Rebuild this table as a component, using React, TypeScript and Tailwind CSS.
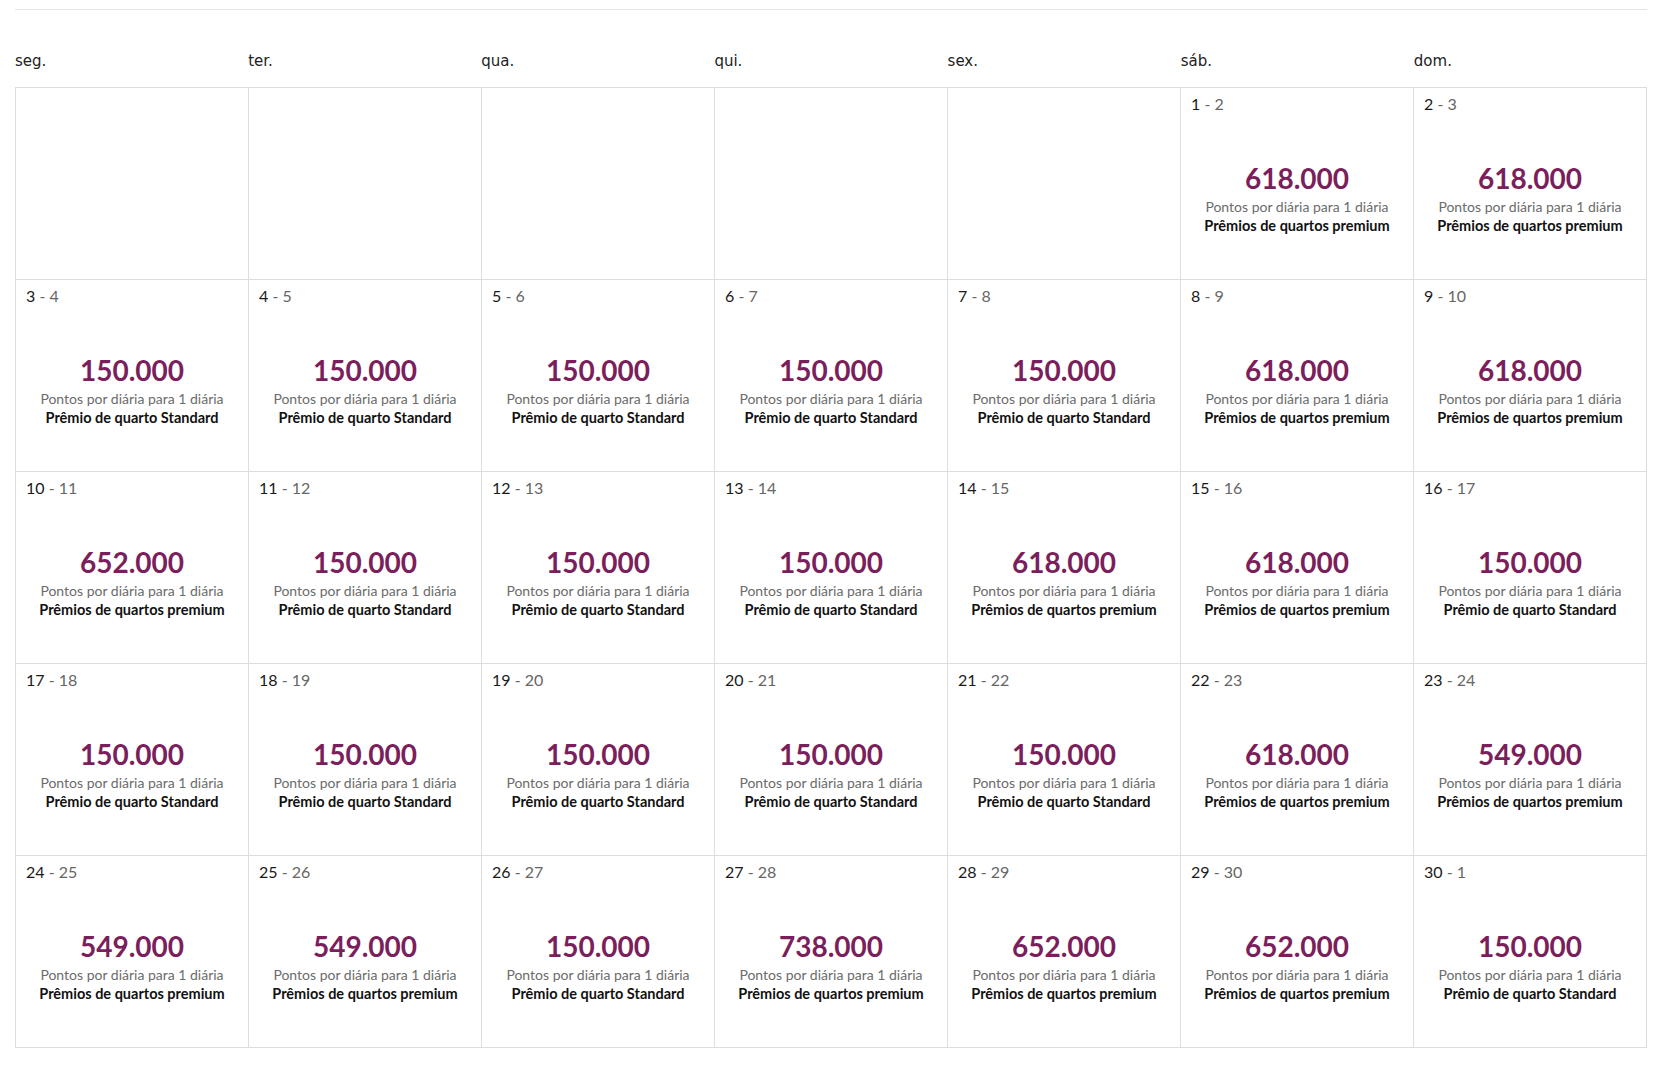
import React from "react";

type Cell = { from: number; to: number; points: string; premium: boolean } | null;

const P = (from: number, to: number, points: string): Cell => ({ from, to, points, premium: true });
const S = (from: number, to: number): Cell => ({ from, to, points: "150.000", premium: false });

const days = ["seg.", "ter.", "qua.", "qui.", "sex.", "sáb.", "dom."];

const cells: Cell[] = [
  null, null, null, null, null, P(1, 2, "618.000"), P(2, 3, "618.000"),
  S(3, 4), S(4, 5), S(5, 6), S(6, 7), S(7, 8), P(8, 9, "618.000"), P(9, 10, "618.000"),
  P(10, 11, "652.000"), S(11, 12), S(12, 13), S(13, 14), P(14, 15, "618.000"), P(15, 16, "618.000"), S(16, 17),
  S(17, 18), S(18, 19), S(19, 20), S(20, 21), S(21, 22), P(22, 23, "618.000"), P(23, 24, "549.000"),
  P(24, 25, "549.000"), P(25, 26, "549.000"), S(26, 27), P(27, 28, "738.000"), P(28, 29, "652.000"), P(29, 30, "652.000"), S(30, 1),
];

function DayCell({ cell }: { cell: Cell }) {
  return (
    <div className="h-[192px] border-r border-b border-[#dddddd] font-['Lato',sans-serif]">
      {cell && (
        <>
          <div className="pt-[6px] pl-[10px] text-[16px] leading-[20px]">
            <span className="text-[#1a1a1a]">{cell.from}</span>
            <span className="text-[#666666]"> - {cell.to}</span>
          </div>
          <div className="mt-[48px] text-center text-[28px] leading-[32px] font-bold text-[#7b1f5c]">
            {cell.points}
          </div>
          <div className="mt-[3px] text-center text-[14px] leading-[19px] text-[#6b6b6b]">
            Pontos por diária para 1 diária
          </div>
          <div className="text-center text-[14.5px] leading-[19px] font-bold text-[#111111]">
            {cell.premium ? "Prêmios de quartos premium" : "Prêmio de quarto Standard"}
          </div>
        </>
      )}
    </div>
  );
}

export default function App() {
  return (
    <div className="w-full h-[1066px] bg-white pl-[15px] pt-[9px]">
      <div className="w-[1632px] border-t border-[#e3e3e3]" />
      <div className="w-[1632px] grid grid-cols-7 h-[77px] items-center pt-[26px]">
        {days.map((d) => (
          <div key={d} className="text-[15px] text-[#222222] font-['DejaVu_Sans',sans-serif]">
            {d}
          </div>
        ))}
      </div>
      <div className="w-[1632px] grid grid-cols-7 border-l border-t border-[#dddddd]">
        {cells.map((c, i) => (
          <DayCell key={i} cell={c} />
        ))}
      </div>
    </div>
  );
}
